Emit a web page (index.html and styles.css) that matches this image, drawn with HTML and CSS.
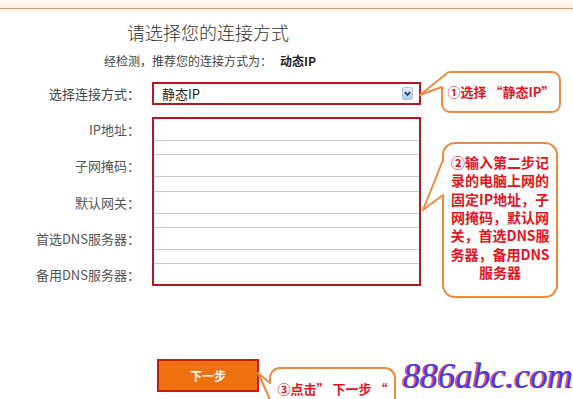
FILE: index.html
```html
<!DOCTYPE html>
<html lang="zh-CN">
<head>
<meta charset="utf-8">
<title>连接方式</title>
<link rel="stylesheet" href="styles.css">
</head>
<body>
<div class="topbar"></div>
<main class="page">
  <h1 class="title">请选择您的连接方式</h1>
  <p class="detect">经检测，推荐您的连接方式为：<b>动态IP</b></p>
  <div class="row">
    <div class="lbl sel-lbl">选择连接方式：</div>
    <div class="select">
      <span>静态IP</span>
      <span class="arrow"><svg width="11" height="13" viewBox="0 0 11 13"><defs><linearGradient id="ag" x1="0" y1="0" x2="0" y2="1"><stop offset="0" stop-color="#e6eefa"/><stop offset="1" stop-color="#b4c6e6"/></linearGradient></defs><rect x="0.5" y="0.5" width="10" height="12" rx="1.5" fill="url(#ag)" stroke="#b3c3df"/><path d="M2.8 5.2 L5.5 7.9 L8.2 5.2" fill="none" stroke="#1f3d80" stroke-width="1.8"/></svg></span>
    </div>
  </div>
  <div class="row fields-row">
    <div class="labels">
      <div class="lbl">IP地址：</div>
      <div class="lbl">子网掩码：</div>
      <div class="lbl">默认网关：</div>
      <div class="lbl">首选DNS服务器：</div>
      <div class="lbl">备用DNS服务器：</div>
    </div>
    <div class="fields">
      <div class="field"></div>
      <div class="field"></div>
      <div class="field"></div>
      <div class="field"></div>
      <div class="field"></div>
    </div>
  </div>
  <div class="actions"><button class="next">下一步</button></div>
</main>

<svg class="bubble b1" width="150" height="48" viewBox="0 0 150 48"><path d="M34 4 H136 A8 8 0 0 1 144 12 V36 A8 8 0 0 1 136 44 H34 A8 8 0 0 1 26 36 V19 L4 27 L30 6 Q31 4 34 4 Z" fill="#fff" stroke="#eb8b40" stroke-width="2" stroke-linejoin="round"/></svg>
<div class="note n1">①选择 “静态IP”</div>

<svg class="bubble b2" width="145" height="164" viewBox="0 0 145 164"><path d="M37 5 H127 A12 12 0 0 1 139 17 V147 A12 12 0 0 1 127 159 H37 A12 12 0 0 1 25 147 V57 L5 72 L25 22 V17 A12 12 0 0 1 37 5 Z" fill="#fff" stroke="#eb8b40" stroke-width="2" stroke-linejoin="round"/></svg>
<div class="note n2">②输入第二步记<br>录的电脑上网的<br>固定IP地址，子<br>网掩码，默认网<br>关，首选DNS服<br>务器，备用DNS<br>服务器</div>

<svg class="bubble b3" width="145" height="35" viewBox="0 0 145 35"><path d="M25 4 H130 A10 10 0 0 1 140 14 V60 H14 V33 L3 9 L15 19 V14 A10 10 0 0 1 25 4 Z" fill="#fff" stroke="#eb8b40" stroke-width="2" stroke-linejoin="round"/></svg>
<div class="note n3">③点击” 下一步 “</div>

<div class="watermark">886abc.com</div>
</body>
</html>
```

FILE: styles.css
```css
html, body {
  margin: 0;
  height: 100%;
  overflow: hidden;
  background: #fff;
}
body {
  position: relative;
  font-family: "Noto Sans CJK SC", "Noto Sans", sans-serif;
  color: #333;
}
.topbar {
  height: 8px;
  background: linear-gradient(#fffaf3, #fbefe0);
  border-bottom: 1px solid #c6a479;
  box-shadow: 0 2px 3px rgba(235, 205, 165, 0.35);
}
.page {
  display: flex;
  flex-direction: column;
}
.title {
  margin: 11px 0 0 127px;
  font-size: 18px;
  line-height: 24px;
  font-weight: 300;
  color: #333;
}
.detect {
  margin: 8px 0 0 104px;
  font-size: 12px;
  line-height: 18px;
  color: #444;
}
.detect b {
  margin-left: 8px;
  color: #222;
  font-weight: 700;
}
.row {
  display: flex;
  gap: 12px;
  margin-top: 12px;
}
.lbl {
  width: 140px;
  text-align: right;
  font-size: 13px;
  color: #555;
  height: 23px;
  line-height: 23px;
}
.sel-lbl {
  color: #444;
}
.select {
  box-sizing: border-box;
  width: 269px;
  height: 23px;
  border: 2px solid #b11a22;
  display: flex;
  align-items: center;
  justify-content: space-between;
  padding: 0 6px 0 8px;
  font-size: 13px;
  color: #222;
}
.arrow {
  display: flex;
}
.labels {
  display: flex;
  flex-direction: column;
  gap: 13.25px;
  padding-top: 2px;
}
.labels .lbl:first-child {
  height: 22px;
  line-height: 21px;
}
.fields {
  box-sizing: border-box;
  width: 269px;
  border: 2px solid #b11a22;
  display: flex;
  flex-direction: column;
  gap: 13.25px;
}
.field {
  box-sizing: border-box;
  height: 23px;
  border-top: 1px solid #cacaca;
  border-bottom: 1px solid #cacaca;
}
.field:first-child {
  height: 22px;
  border-top: 0;
}
.field:last-child {
  height: 20px;
  border-bottom: 0;
}
.actions {
  margin: 73px 0 0 157px;
}
.next {
  box-sizing: border-box;
  width: 102px;
  height: 33px;
  background: #ee700f;
  border: 2px solid #c81a1c;
  color: #fff;
  font-family: "Noto Sans CJK SC", sans-serif;
  font-size: 12px;
  font-weight: 700;
  padding: 0;
}
.bubble {
  position: absolute;
}
.b1 { left: 416px; top: 68px; }
.b2 { left: 418px; top: 138px; }
.b3 { left: 255px; top: 364px; }
.note {
  position: absolute;
  color: #e3141e;
  font-weight: 700;
  text-align: center;
}
.n1 {
  left: 442px;
  top: 72px;
  width: 118px;
  font-size: 13px;
  line-height: 40px;
}
.n2 {
  left: 443px;
  top: 153px;
  width: 114px;
  font-size: 14px;
  line-height: 18.33px;
}
.n3 {
  left: 270px;
  top: 380px;
  width: 125px;
  font-size: 13px;
  line-height: 18px;
}
.watermark {
  position: absolute;
  left: 403px;
  top: 357px;
  font-family: "Liberation Serif", serif;
  font-style: italic;
  font-size: 35px;
  line-height: 40px;
  color: #3b3bef;
  text-shadow: -1.5px 0 #f0485a;
}
```
